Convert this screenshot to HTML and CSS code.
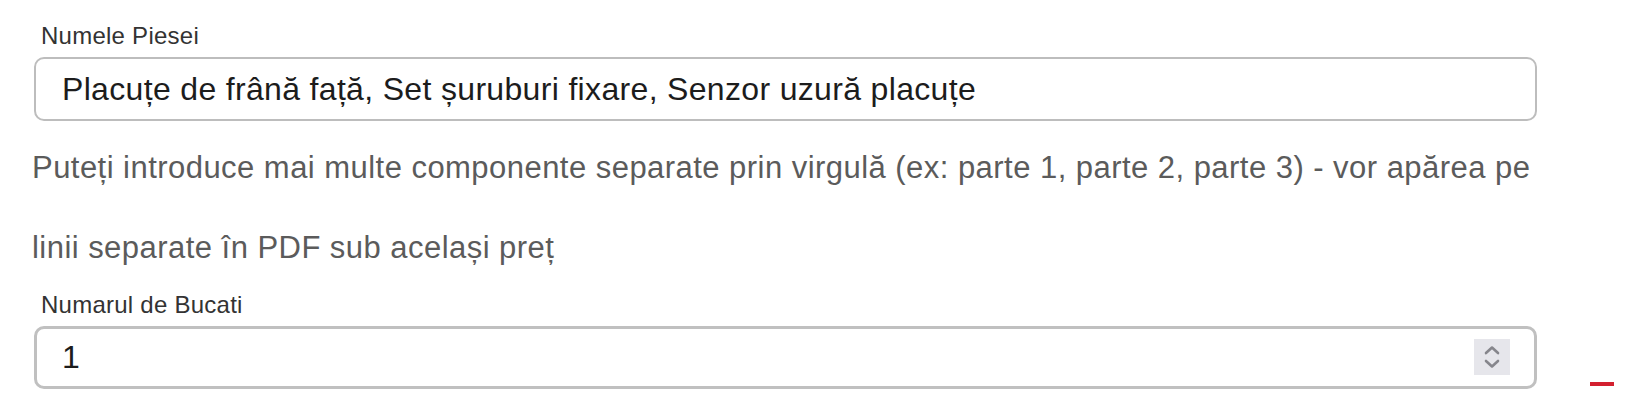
FILE: index.html
```html
<!DOCTYPE html>
<html lang="ro">
<head>
    <meta charset="UTF-8">
    <meta name="viewport" content="width=device-width, initial-scale=1.0">
    <title>Piese</title>
    <link rel="stylesheet" href="styles.css">
</head>
<body>
    <div class="page">
        <form class="part-form">
            <!-- nume piesa -->
            <div class="field">
                <label class="field-label" for="part-name">Numele Piesei</label>
                <input class="field-input" id="part-name" type="text" value="Placuțe de frână față, Set șuruburi fixare, Senzor uzură placuțe">
            </div>
            <p class="field-help">Puteți introduce mai multe componente separate prin virgulă (ex: parte 1, parte 2, parte 3) - vor apărea pe linii separate în PDF sub același preț</p>

            <!-- cantitate -->
            <div class="field">
                <label class="field-label" for="part-qty">Numarul de Bucati</label>
                <div class="number-wrap">
                    <input class="field-input field-input--number" id="part-qty" type="number" value="1" min="1">
                    <span class="spinner">
                        <svg width="20" height="28" viewBox="0 0 20 28" fill="none" stroke="#86868c" stroke-width="2.6" stroke-linecap="round" stroke-linejoin="round">
                            <polyline points="4,10 10,4.5 16,10"></polyline>
                            <polyline points="4,18 10,23.5 16,18"></polyline>
                        </svg>
                    </span>
                </div>
            </div>
        </form>

        <div class="side">
            <span class="side-mark"></span>
        </div>
    </div>
</body>
</html>
```

FILE: styles.css
```css
* {
    margin: 0;
    padding: 0;
    box-sizing: border-box;
}

body {
    background: #fff;
    font-family: "Liberation Sans", Arial, Helvetica, sans-serif;
    height: 408px;
    overflow: hidden;
}

.page {
    display: flex;
    padding: 22px 0 0 32px;
}

.part-form {
    width: 1505px;
}

.field-label {
    display: block;
    font-size: 24px;
    line-height: 28px;
    letter-spacing: 0.25px;
    color: #333;
    padding-left: 9px;
    margin-bottom: 7px;
}

.field-input {
    display: block;
    width: 1503px;
    height: 64px;
    margin-left: 2px;
    padding: 0 24px 0 26px;
    border: 2px solid #bdbdbd;
    border-radius: 10px;
    background: #fff;
    font-family: inherit;
    font-size: 32px;
    letter-spacing: 0.33px;
    color: #1c1c1c;
    outline: none;
}

/* textul de ajutor */
.field-help {
    font-size: 31px;
    line-height: 80px;
    letter-spacing: 0.46px;
    color: #5b5b5b;
    margin-top: 7px;
    margin-bottom: 3px;
}

.number-wrap {
    position: relative;
}

.field-input--number {
    height: 63px;
    border: 3px solid #c0c0c0;
    padding-left: 25px;
    -moz-appearance: textfield;
    appearance: textfield;
}

.field-input--number::-webkit-inner-spin-button,
.field-input--number::-webkit-outer-spin-button {
    -webkit-appearance: none;
    margin: 0;
}

.spinner {
    position: absolute;
    top: 13px;
    left: 1442px;
    width: 36px;
    height: 36px;
    background: #e6e6eb;
    display: flex;
    align-items: center;
    justify-content: center;
}

.side {
    flex: 1;
    display: flex;
    align-items: flex-end;
    height: 364px;
}

.side-mark {
    display: block;
    width: 24px;
    height: 4px;
    margin-left: 53px;
    background: #d3202f;
}
```
